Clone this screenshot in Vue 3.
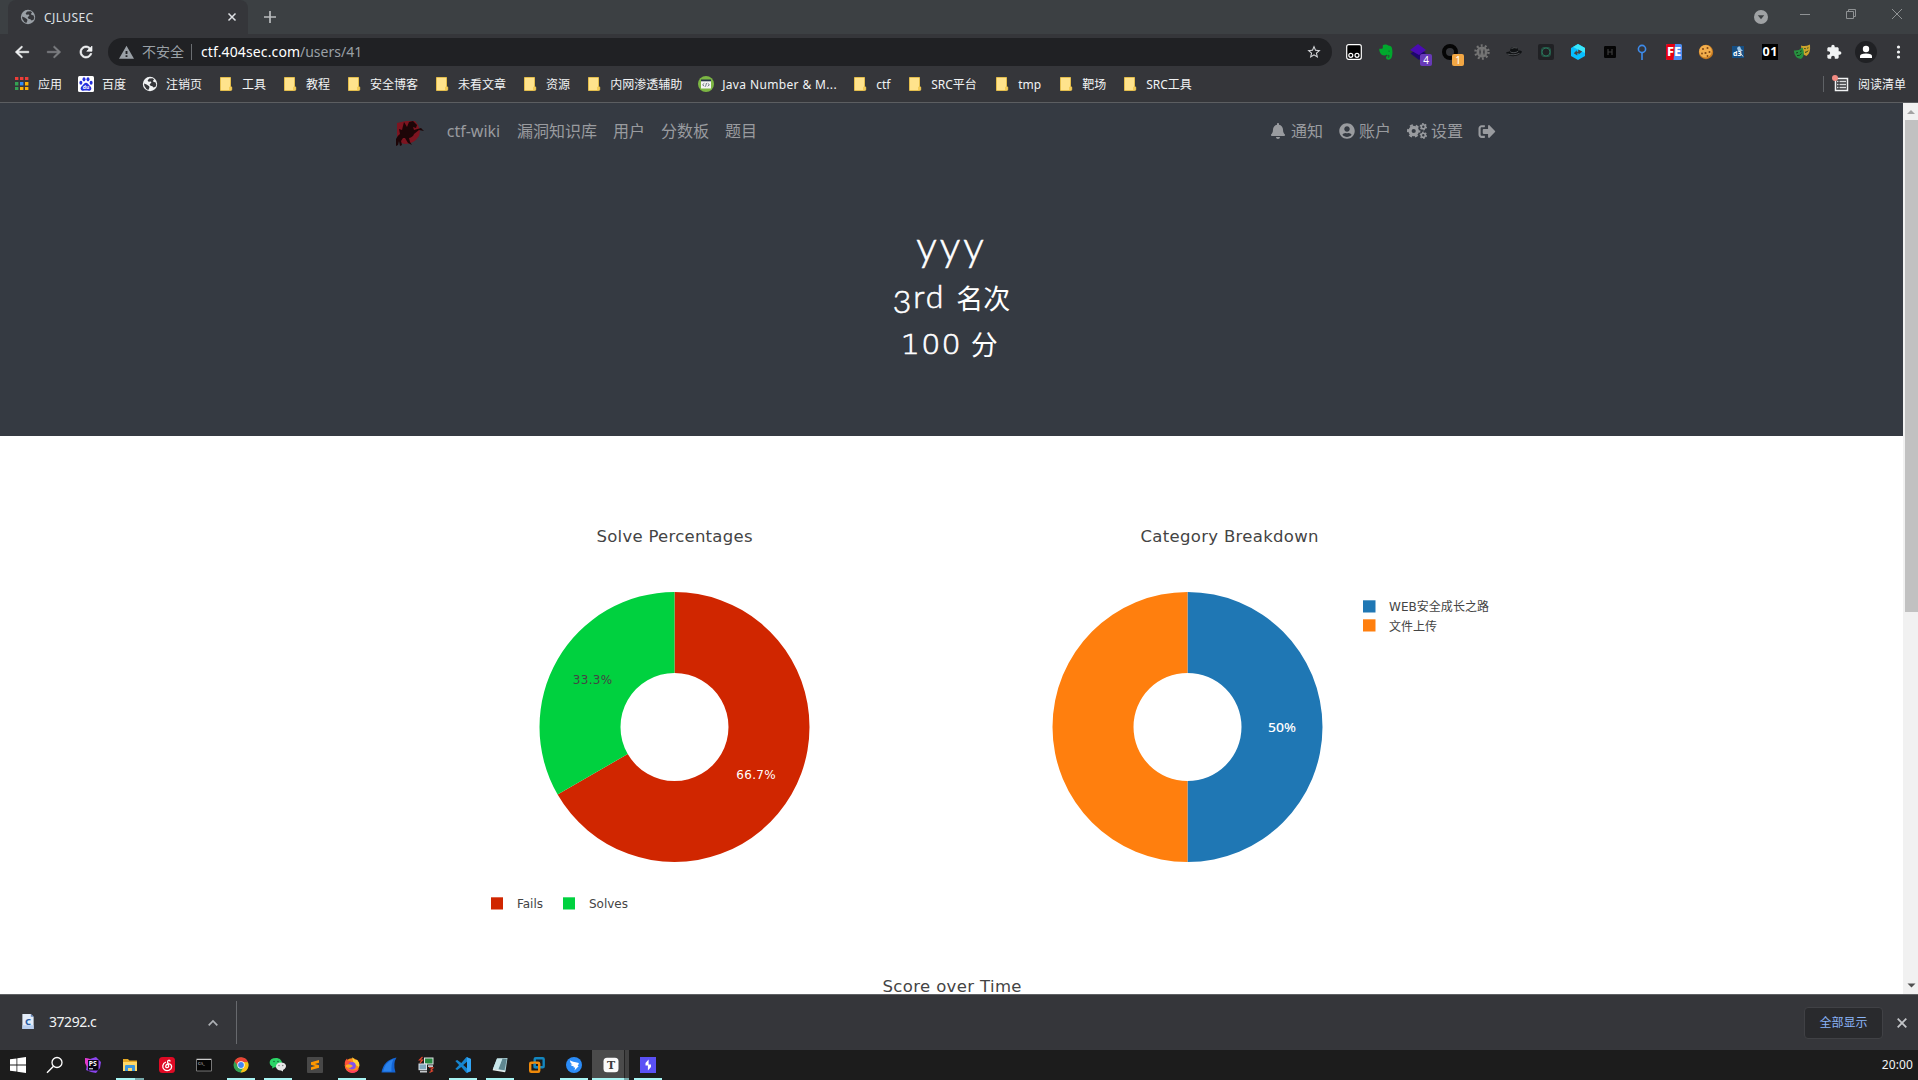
<script setup>
const globe = (land, sea) => `<circle cx="8" cy="8" r="7.2" fill="${land}"/><path d="M7.2 2.6 5.6 4.4l1 1.3 2.2-.3.6 1.4-1.8 1.4.9 1.5 1.9.5 1.2 1.4 2-.8.7-2.4-.9-2.1-1.9-.2-.4-1.6 1-1.2-1.6-1.1zM2 7.4l2.6 1 2.6 1.8.2 1.5-1.1 2.3-1.9-.9-2-3z" fill="${sea}"/>`

const folder = '<path d="M2.5 1.5h10v9.3l1.2.3v2.4q0 1-1 1H2.5z" fill="#ffe38c" stroke="#e3bd4c"/><path d="M11 14v-3.2h2.5V14z" fill="#f4cc57"/>'

const bookmarks = [
  { t: '应用', i: '<path d="M1 1h3.4v3H1zM6 1h3.4v3H6zM11 1h3.4v3H11z" fill="#ee3e38"/><path d="M1 6h3.4v3.4H1zM1 11h3.4v3H1z" fill="#34a353"/><path d="M6 6h3.4v3.4H6z" fill="#2f8df5"/><path d="M11 6h3.4v3.4H11zM6 11h3.4v3H6zM11 11h3.4v3H11z" fill="#fbb307"/>' },
  { t: '百度', i: '<rect width="16" height="16" rx="1.5" fill="#fff"/><g fill="#2630dc"><ellipse cx="2.9" cy="6.8" rx="1.5" ry="2"/><ellipse cx="6" cy="3.3" rx="1.5" ry="2.1"/><ellipse cx="10" cy="3.3" rx="1.5" ry="2.1"/><ellipse cx="13.1" cy="6.8" rx="1.5" ry="2"/><path d="M8 6.7c1.7 0 2.3 1.6 3.5 2.7 1.6 1.4 2.3 2.7 1.6 4.1-.8 1.9-3.2 1-5.1 1s-4.300.9-5.100-1c-.7-1.400 0-2.700 1.600-4.100C5.700 8.300 6.300 6.700 8 6.700z"/></g><text x="8" y="13.300" font-size="5" font-weight="700" text-anchor="middle" fill="#fff">du</text>' },
  { t: '注销页', i: globe('#f1f3f4', '#35363a') },
  { t: '工具', i: folder },
  { t: '教程', i: folder },
  { t: '安全博客', i: folder },
  { t: '未看文章', i: folder },
  { t: '资源', i: folder },
  { t: '内网渗透辅助', i: folder },
  { t: 'Java Number & M...', w: 114, i: '<circle cx="8" cy="8" r="8" fill="#7cb643"/><rect x="3" y="4" width="10" height="8.500" fill="#f4f4f4"/><path d="M3 3.500h10v1.800H3z" fill="#263648"/><path d="m6.300 7.300-1.700 1.500 1.700 1.500m3.400-3 1.700 1.500-1.700 1.500M8.500 7l-1 3.700" stroke="#4a5866" fill="none" stroke-width=".8"/>' },
  { t: 'ctf', w: 15, i: folder },
  { t: 'SRC平台', w: 47, i: folder },
  { t: 'tmp', w: 24, i: folder },
  { t: '靶场', i: folder },
  { t: 'SRC工具', w: 47, i: folder },
]

const extensions = [
  '<rect x=".7" y=".7" width="14.600" height="14.600" rx="2" fill="#000" stroke="#fff" stroke-width="1.200"/><g fill="none" stroke="#fff" stroke-width="1.200"><circle cx="4.800" cy="11.300" r="2"/><circle cx="11" cy="11.300" r="2"/></g>',
  '<path d="M4.800 1.200C6 .2 9 .2 10.200 1.600c2.300.2 3.300.8 3.800 2.700.7 3.200.6 6.500-.3 9-.6 1.900-2.300 2.500-4 2.300-1.700-.3-2.300-2.700-.9-3.700.8-.6 2.100-.5 2.500.4l-1.400.3c-.5 1 .9 1.500 1.400.5.300-.8.100-1.900-.4-2.300-.8.500-1.700.5-2.200-.3-.5 1.300-3.700 1.100-5 .2C2.100 9.700 1 6.700 1.300 4.800h2.500c.9 0 1-.4 1-1.200z" fill="#00a82d"/><path d="M10.200 7.300c.6-.7 1.600-.6 2 .2-.7-.2-1.300-.3-2-.2" fill="#23262a"/>',
  '<path d="m8 4 8 5-7 7L.5 9.500z" fill="#1e086b"/><path d="m8 0 8 6-7 5L0 6z" fill="#4a0bb3"/>',
  '<circle cx="8" cy="8" r="6" fill="none" stroke="#050505" stroke-width="4"/>',
  '<circle cx="8" cy="8" r="6.500" fill="none" stroke="#747474" stroke-width="2.500" stroke-dasharray="1.900 2.180"/><circle cx="8" cy="8" r="5.500" fill="#747474"/><path d="M6 5.500v5M10 5.500v5M5.500 8H7m2 0h1.500" stroke="#35363a" fill="none"/>',
  '<path d="M0 8.500c2-.9 3.300-.6 4-1.500.7-3.800 1.600-3.600 4.300-4 2.500-.3 3.600.9 4 3.600 2 .1 3.400.4 3.700 1.200-2.100 5-13.500 6.400-16 .7z" fill="#101214"/><path d="M4.200 7.700c1.500 1.500 5.800 1.400 8-.5M1.500 10c4 1.300 8.800.9 12-.7M5.500 4.500q2.500-1.500 5.500-.5" fill="none" stroke="#6a6d70" stroke-width=".7"/>',
  '<rect width="16" height="16" rx="2" fill="#202124"/><rect x="3.500" y="3.500" width="9" height="9" rx="2.500" fill="none" stroke="#245847"/><circle cx="8" cy="8" r="4" fill="none" stroke="#2a7259"/>',
  '<path d="m8 0 7 4v8l-7 4-7-4V4z" fill="#08bfff"/><path d="m8 0 7 4v5L3 3z" fill="#3be7fa"/><path d="m3.800 9.300 3-3v1.400h1.400V5.500L12.200 7.500l-3.600 3V9.200H7.300v2.200z" fill="#4a4240"/>',
  '<rect x="2" y="2" width="12" height="12" rx="1.200" fill="#050505"/><path d="M6 5v6M10 5v6M6 8h4" stroke="#3c3c3c" stroke-width="1.200"/>',
  '<circle cx="8" cy="5" r="3.600" fill="none" stroke="#3d8bea" stroke-width="1.600"/><path d="M8 8v8" stroke="#3d8bea" stroke-width="1.600"/>',
  '<rect width="16" height="16" rx="1.500" fill="#4b8df0"/><path d="M1.500 0H9L7.500 16h-6Q0 16 0 14.500v-13Q0 0 1.500 0" fill="#e60012"/><text x="8" y="12" font-size="11.500" font-weight="800" text-anchor="middle" fill="#fff" textLength="14" lengthAdjust="spacingAndGlyphs">FE</text>',
  '<circle cx="8" cy="8" r="7.200" fill="#c77a20"/><circle cx="7.500" cy="7.300" r="6.300" fill="#f1ad4c"/><g fill="#7e4513"><circle cx="5" cy="5" r="1"/><circle cx="9.500" cy="4" r="1"/><circle cx="11.500" cy="8" r="1"/><circle cx="7.500" cy="9" r="1.100"/><circle cx="4" cy="9.500" r=".9"/><circle cx="9.500" cy="12" r=".9"/></g>',
  '<rect x="2" y="2" width="12" height="12" fill="#164f83"/><path d="M7 4q3-4 4 1l2 2-5 0z" fill="#9fc4e3"/><text x="3" y="12" font-size="7" font-weight="700" fill="#fff">d3</text><path d="m10.500 9 2.500 3.500" stroke="#d8e6f0"/>',
  '<path d="M0 0h16v16H0z" fill="#000"/><text x="8" y="12" font-size="12.500" font-weight="700" text-anchor="middle" fill="#fff" textLength="15">01</text>',
  '<path d="M7 1.500q4 1.500 9-1 .8 9-3.500 11.500Q7.500 11 7 1.500" fill="#cfa42b"/><path d="M-.2 6.500Q5 7 8.600 3.500 12 11.500 7 15 .5 14.500-.2 6.500" fill="#27913f"/><path d="m2 9 2-.5m2-1 1.700-.7M3 11.500q2.500.7 4.500-2M10.300 4.500l1.400.2m1.500-.5 1.200-.4M11 8.300q2 .2 3-1.700" stroke="#173d20" fill="none"/>',
  '<path transform="scale(.667)" d="M20.500 11H19V7c0-1.100-.9-2-2-2h-4V3.500C13 2.120 11.880 1 10.500 1S8 2.120 8 3.500V5H4c-1.100 0-1.990.9-1.990 2v3.800H3.500c1.490 0 2.700 1.210 2.700 2.700s-1.210 2.700-2.700 2.700H2V20c0 1.100.9 2 2 2h3.800v-1.500c0-1.490 1.210-2.700 2.700-2.700 1.490 0 2.700 1.210 2.700 2.700V22H17c1.100 0 2-.9 2-2v-4h1.500c1.380 0 2.500-1.120 2.500-2.500S21.880 11 20.500 11z" fill="#f1f3f4"/>',
  '<circle cx="8" cy="8" r="11" fill="#202124"/><circle cx="8" cy="5" r="3.200" fill="#fff"/><path d="M2 14v-1.800Q2 9.500 8 9.500t6 2.700V14z" fill="#fff"/>',
  '<g fill="#f1f3f4"><circle cx="8.500" cy="3" r="1.600"/><circle cx="8.500" cy="8" r="1.600"/><circle cx="8.500" cy="13" r="1.600"/></g>',
]
const badges = { 2: ['4', 'violet'], 3: ['1', 'amber'] }

const tasks = [
  { i: '<path d="M0 2.300 6.500 1.400v6.200H0zM7.300 1.300 16 0v7.600H7.300zM0 8.400h6.500v6.200L0 13.700zM7.300 8.400H16V16l-8.700-1.300z" fill="#fff"/>' },
  { i: '<circle cx="10" cy="5.500" r="5" fill="none" stroke="#fff" stroke-width="1.300"/><path d="M6.500 9.200 0 15.700" stroke="#fff" stroke-width="1.500"/>' },
  { i: '<path d="M0 1 5 2l6-2 5 5-1 6-4 5-5-1-5-2 1-5z" fill="#8b45ed"/><path d="m0 1 5 1 2 4-5 4-2-4z" fill="#e33acb"/><rect x="3" y="3" width="10.500" height="10.500" fill="#080412"/><text x="3.700" y="9.300" font-size="6.800" font-weight="700" fill="#fff">PS</text><path d="M4 11.800h4" stroke="#fff"/>' },
  { i: '<path d="M1 2h5l1.300 1.500H15V14H1z" fill="#e7a924"/><path d="M1 5h14v9H1z" fill="#ffd968"/><path d="M3 14V9q0-1 1-1h8q1 0 1 1v5h-3v-3H6v3z" fill="#3c96dc"/>', run: 'split' },
  { i: '<rect width="16" height="16" rx="3.500" fill="#df0a24"/><path d="M11.300 4.500C10.700 2.600 8.300 3 8.600 5l1 4c.3 2-2.800 2.400-2.900.4 0-1.600 1.600-3 3.600-2.500 3 .8 3.200 5-.1 6.300-3.600 1.300-7-1.200-6.400-4.500C4.100 7 5.200 5.600 7 5" fill="none" stroke="#fff" stroke-width="1.300"/>' },
  { i: '<path d="M.5 2h15v12H.5z" fill="#050505" stroke="#777"/><path d="M1 2.500h14" stroke="#ccc"/><text x="2" y="7.500" font-size="4" fill="#eee">C:\\_</text>' },
  { i: '<circle cx="8" cy="8" r="7.500" fill="#34a353"/><path d="M1.500 4.200A7.500 7.500 0 0 1 15 5H8L5 9z" fill="#e94335"/><path d="M15 5.200A7.500 7.500 0 0 1 7.500 15.500L11.200 9 10.500 5z" fill="#fbc116"/><circle cx="8" cy="8" r="3.700" fill="#fff"/><circle cx="8" cy="8" r="2.900" fill="#4285f4"/>', run: 'on' },
  { i: '<path d="M6 1c-8 0-7.500 7-3.500 8.500L2 11.500l2.500-1.200C15 11 13.500 1 6 1" fill="#2bd567"/><path d="M11 5.500c-7 0-6.500 8 0 8l2 1v-1.500c5-2.500 3.500-7.500-2-7.500" fill="#e7e7e7"/><g fill="#17663b"><circle cx="4" cy="4.500" r=".8"/><circle cx="8" cy="4.500" r=".8"/></g><g fill="#777"><circle cx="9" cy="8.500" r=".7"/><circle cx="12.800" cy="8.500" r=".7"/></g>', run: 'on' },
  { i: '<rect width="16" height="16" rx="1" fill="#484848"/><path d="m4 5.300 8-2.300v2.800L7.800 7 12 8.300v2.500L4 13v-2.700L8.400 9 4 7.700z" fill="#ff9800"/>' },
  { i: '<circle cx="8" cy="8.500" r="7.300" fill="#ff8b19"/><path d="M8 .2q2 1 3 3 2-1 2.700.5Q16 6 15 10l-5-3z" fill="#ffd438"/><path d="M.7 6Q1 3 3 1.500L4 4l3 0-1 3-4 4z" fill="#ff513b"/><circle cx="8" cy="8.700" r="3.800" fill="#8051ed"/><path d="M2 8q4-2 7 1l-3 2-4-1z" fill="#ffaf25"/><path d="M1 10q2 5 7 5.900 5 0 7-4-8 4-14-1.900" fill="#ff405e"/>', run: 'on' },
  { i: '<path d="M.5 15.500Q2.500 3 15.500.5q-3.800 6-1 15z" fill="#1363d2"/><path d="M2 14.500Q4 5 12.500 2q-2.500 5-2 12.500z" fill="#2a82ec"/>' },
  { i: '<path d="M6 .5h9.500v7H6z" fill="#e0e5e8"/><path d="M7 1.500h7.500v5H7z" fill="#298a41"/><path d="M.5 6.500H9v6.700H.5z" fill="#dce1e8"/><path d="M1.500 7.500H8v4.700H1.500z" fill="#7fa8bf"/><path d="M2 14.700h7m1-5.500h5" stroke="#c5c8ca" stroke-width="1.800"/><path d="M4.500 0 1.500 3h3L2 6M11 10.500l4 .5-2 2 1.500 1-3 1.500" fill="none" stroke="#e0452f" stroke-width="1.200"/>' },
  { i: '<path d="m11.500 0 4.500 2v12l-4.500 2L6.300 10 2.200 13 .3 12l3.800-4L.3 4l1.900-1 4.100 3zM12 4.800 8.200 8l3.800 3.200z" fill="#1686d0" fill-rule="evenodd"/><path d="M12 .2 16 2v12l-4 1.800z" fill="#32a5f5"/>', run: 'on' },
  { i: '<path d="M5 1.500 15.500 1 13.500 14.500 1 12z" fill="#a9cfd6"/><path d="M10 2h4.800L12.500 13.300l-6-1z" fill="#5f8790"/><path d="M5 1.500h5.500L6 12.800l-5-1z" fill="#c8e6ea"/><path d="m1 11.800 12.300 2-.3 1.500-12.300-2z" fill="#e4eeee"/>', run: 'on' },
  { i: '<rect x="5.700" y="1.200" width="9" height="9" rx="1" fill="none" stroke="#1387c0" stroke-width="2.400"/><rect x="1.200" y="5.700" width="9" height="9" rx="1" fill="none" stroke="#f08a0a" stroke-width="2.400"/><path d="M5.700 6.500v3.700H9" fill="none" stroke="#1387c0" stroke-width="2.200"/>' },
  { i: '<circle cx="8" cy="8" r="8" fill="#2b8cf7"/><path d="M3.800 3.200q2.300 1.600 9 2.700.2 1-1.200 3.100h1.200L8.500 13.500l.7-3H7.500l.4-1.100Q5 9 4.500 7.500l2 .1Q4.200 6.500 3.800 3.200" fill="#fff"/>', run: 'on' },
  { i: '<rect x=".5" y=".8" width="15" height="14.400" rx="3.500" fill="#fafafa"/><text x="8" y="12" font-size="11" font-weight="700" text-anchor="middle" fill="#3b3b3b" font-family="DejaVu Serif, serif">T</text>', run: 'active' },
  { i: '<path d="M0 0h16v16H0z" fill="#5a50f5"/><path d="M8.600 2.500 5.500 6v2.600h2.400v4.900l3.100-3.500V7.400H8.600z" fill="#fff"/>', run: 'on' },
]

const menu = ['ctf-wiki', '漏洞知识库', '用户', '分数板', '题目']
const account = [
  { t: '通知', w: 16, vb: '32 0 448 512', i: '<path d="M224 512c35.320 0 63.970-28.650 63.970-64H160.030c0 35.350 28.650 64 63.970 64zm215.390-149.710c-19.320-20.760-55.470-51.990-55.470-154.290 0-77.700-54.480-139.900-127.940-155.160V32c0-17.670-14.320-32-31.980-32s-31.980 14.330-31.980 32v20.840C118.560 68.100 64.080 130.300 64.080 208c0 102.300-36.150 133.530-55.470 154.290-6 6.450-8.660 14.160-8.610 21.710.11 16.400 12.980 32 32.100 32h383.800c19.120 0 32-15.600 32.100-32 .05-7.550-2.610-15.270-8.610-21.710z"/>' },
  { t: '账户', w: 16, vb: '0 0 496 512', i: '<path d="M248 8C111 8 0 119 0 256s111 248 248 248 248-111 248-248S385 8 248 8zm0 96c48.600 0 88 39.400 88 88s-39.400 88-88 88-88-39.400-88-88 39.400-88 88-88zm0 344c-58.700 0-111.300-26.600-146.500-68.200 18.800-35.400 55.600-59.800 98.500-59.800 2.400 0 4.800.4 7.100 1.100 13 4.200 26.600 6.900 40.900 6.900 14.300 0 28-2.700 40.900-6.900 2.300-.7 4.700-1.100 7.100-1.100 42.900 0 79.700 24.400 98.500 59.800C359.300 421.400 306.700 448 248 448z"/>' },
  { t: '设置', w: 20, vb: '0 0 20 16', i: '<g fill="none" stroke="currentColor"><circle cx="6.700" cy="8" r="3.700" stroke-width="3.200"/><circle cx="6.700" cy="8" r="5.700" stroke-width="2" stroke-dasharray="2.980 2.980" stroke-dashoffset="1.500"/><circle cx="16.300" cy="3.700" r="2" stroke-width="1.600"/><circle cx="16.300" cy="3.700" r="3.100" stroke-width="1.200" stroke-dasharray="1.620 1.620"/><circle cx="16.300" cy="12.300" r="2" stroke-width="1.600"/><circle cx="16.300" cy="12.300" r="3.100" stroke-width="1.200" stroke-dasharray="1.620 1.620"/></g>' },
]
</script>

<template>
  <div class="desktop">
    <div class="tabstrip">
      <div class="tab">
        <svg class="s16" viewBox="0 0 16 16" v-html="globe('#9aa0a6', '#35363a')" />
        <span class="tab-title">CJLUSEC</span>
        <svg class="tab-close" viewBox="0 0 8 8"><path d="m.5.5 7 7m0-7-7 7" stroke="#dfe1e5" stroke-width="1.500" /></svg>
      </div>
      <svg class="plus" viewBox="0 0 12 12"><path d="M6 0v12M0 6h12" stroke="#b9bcbe" stroke-width="1.700" /></svg>
      <div class="window-controls">
        <svg class="s16" viewBox="0 0 16 16"><circle cx="8" cy="8" r="7" fill="#9fa2a4" /><path d="M4.800 6.300h6.400L8 10.300z" fill="#3c4043" /></svg>
        <svg class="win" viewBox="0 0 10 10"><path d="M0 5.500h10" stroke="#8f9294" /></svg>
        <svg class="win" viewBox="0 0 10 10"><path d="M.5 2.500h7v7h-7zM2.500 2V.5h7v7H8" fill="none" stroke="#8f9294" /></svg>
        <svg class="win" viewBox="0 0 10 10"><path d="m0 0 10 10M10 0 0 10" stroke="#8f9294" /></svg>
      </div>
    </div>

    <div class="toolbar">
      <svg class="nav-icon" viewBox="0 0 24 24"><path d="M21 11H7.200l5.700-5.600L11.500 4 3 12l8.500 8 1.400-1.400L7.200 13H21z" fill="#f1f3f4" stroke="#f1f3f4" stroke-width=".7" /></svg>
      <svg class="nav-icon" viewBox="0 0 24 24"><path d="M3 11h13.800l-5.700-5.600L12.500 4l8.500 8-8.500 8-1.400-1.400 5.700-5.600H3z" fill="#7d7f82" stroke="#7d7f82" stroke-width=".7" /></svg>
      <svg class="nav-icon" viewBox="0 0 24 24"><path d="M17.650 6.350C16.200 4.900 14.210 4 12 4c-4.420 0-7.990 3.580-7.990 8s3.570 8 7.990 8c3.730 0 6.840-2.550 7.730-6h-2.080c-.82 2.330-3.040 4-5.650 4-3.310 0-6-2.690-6-6s2.690-6 6-6c1.660 0 3.140.69 4.220 1.780L13 11h7V4z" fill="#f1f3f4" stroke="#f1f3f4" stroke-width=".9" /></svg>
      <div class="omnibox">
        <svg class="warn" viewBox="0 0 24 24"><path d="M0 22h24L12 1zm13.500-3h-3v-2.500h3zm0-4.500h-3v-5h3z" fill="#9aa0a6" /></svg>
        <span class="insecure">不安全</span>
        <i class="bar" />
        <span class="host">ctf.404sec.com</span><span class="path">/users/41</span>
        <svg class="star" viewBox="0 0 24 24"><path d="M22 9.240l-7.190-.62L12 2 9.190 8.630 2 9.240l5.460 4.730L5.820 21 12 17.270 18.180 21l-1.630-7.030zM12 15.400l-3.760 2.270 1-4.280-3.320-2.880 4.380-.38L12 6.100l1.710 4.040 4.380.38-3.320 2.880 1 4.280z" fill="#d5d7da" /></svg>
      </div>
      <div class="extensions">
        <div v-for="(e, n) in extensions" :key="n" class="ext">
          <svg class="s16" viewBox="0 0 16 16" v-html="e" />
          <span v-if="badges[n]" class="badge" :class="badges[n][1]">{{ badges[n][0] }}</span>
        </div>
      </div>
    </div>

    <div class="bookmarks">
      <div v-for="b in bookmarks" :key="b.t" class="bookmark">
        <svg class="s16" viewBox="0 0 16 16" v-html="b.i" />
        <span :style="b.w ? { width: b.w + 'px' } : null" :class="{ latin: b.w > 100 }">{{ b.t }}</span>
      </div>
      <div class="reading">
        <svg class="s20" viewBox="0 0 20 20"><path d="M5.500 4.500h12v12h-12z" fill="none" stroke="#f1f3f4" stroke-width="1.500" /><path d="M7 7.500h1.500m1 0H16m-9 3h1.500m1 0H16m-9 3h1.500m1 0H16" stroke="#d8dadc" stroke-width="1.300" /><circle cx="5" cy="4" r="3" fill="#f28b82" /></svg>
        <span>阅读清单</span>
      </div>
    </div>

    <div class="viewport">
      <div class="page">
        <header class="hero">
          <nav class="site-nav">
            <svg class="logo" viewBox="0 0 28 26"><path d="M1 3 10 1h9q7 8 4 15-5 8-14 8-7-1-8-8z" fill="#7d1420" /><path d="M8 2l3 5 2-5 4-1 4 4-1 3-3-1 1 3 7-2 3 3-5-1-5 4q-1 3-5 4l1 4 2 3-4-2-3-5-2 0-2 3 1 4-2 1-1-5-1 4-2 1V19q2-4 4-5L3 9l3 1z" fill="#1d0507" /></svg>
            <a v-for="m in menu" :key="m">{{ m }}</a>
            <div class="account">
              <a v-for="a in account" :key="a.t"><svg :viewBox="a.vb" :width="a.w" height="16" fill="currentColor" v-html="a.i" />{{ a.t }}</a>
              <a><svg viewBox="0 0 512 512" width="18" height="17" fill="currentColor"><path d="M497 273L329 441c-15 15-41 4.500-41-17v-96H152c-13.300 0-24-10.700-24-24v-96c0-13.300 10.700-24 24-24h136V88c0-21.400 25.900-32 41-17l168 168c9.300 9.400 9.300 24.600 0 34zM192 436v-40c0-6.600-5.400-12-12-12H96c-17.700 0-32-14.300-32-32V160c0-17.700 14.300-32 32-32h84c6.600 0 12-5.400 12-12V76c0-6.600-5.400-12-12-12H96c-53 0-96 43-96 96v192c0 53 43 96 96 96h84c6.600 0 12-5.400 12-12z" /></svg></a>
            </div>
          </nav>
          <h1>yyy</h1>
          <h2><span class="low">3</span>rd <span class="cjk">名次</span></h2>
          <h2 class="points"><span class="oldstyle">100</span><span class="cjk">分</span></h2>
        </header>

        <div class="charts">
          <svg width="560" height="500" viewBox="0 0 560 500">
            <text x="282.500" y="106" class="title" textLength="156">Solve Percentages</text>
            <path d="M282.500 156a135 135 0 1 1-116.910 202.500l70.140-40.500A54 54 0 1 0 282.500 237z" fill="#d02600" />
            <path d="M282.500 156a135 135 0 0 0-116.910 202.500l70.140-40.500A54 54 0 0 1 282.500 237z" fill="#00d13f" />
            <text x="200.500" y="248" class="label" textLength="39.500">33.3%</text>
            <text x="364" y="343" class="label light" textLength="39.500">66.7%</text>
            <path d="M99 461.300h12v12.200H99z" fill="#d02600" /><text x="125" y="472" class="key" textLength="26">Fails</text>
            <path d="M171 461.300h12v12.200h-12z" fill="#00d13f" /><text x="197" y="472" class="key" textLength="39">Solves</text>
          </svg>
          <svg width="560" height="500" viewBox="0 0 560 500">
            <text x="277.500" y="106" class="title" textLength="178">Category Breakdown</text>
            <path d="M235.500 156a135 135 0 0 1 0 270v-81a54 54 0 0 0 0-108z" fill="#1f77b4" />
            <path d="M235.500 156a135 135 0 0 0 0 270v-81a54 54 0 0 1 0-108z" fill="#ff7f0e" />
            <text x="330" y="296" class="label light half" textLength="28" lengthAdjust="spacingAndGlyphs">50%</text>
            <path d="M411 164.300h12.500v12.200H411z" fill="#1f77b4" /><text x="437" y="175" class="key" textLength="100">WEB安全成长之路</text>
            <path d="M411 183.300h12.500v12.200H411z" fill="#ff7f0e" /><text x="437" y="194.500" class="key">文件上传</text>
          </svg>
        </div>
        <svg class="score" width="1120" height="100" viewBox="0 0 1120 100"><text x="560" y="56" class="title" textLength="139">Score over Time</text></svg>
      </div>
      <div class="scrollbar">
        <svg viewBox="0 0 15 17"><path d="m4 11 4-4 4 4z" fill="#a3a3a3" /></svg>
        <div class="thumb" />
        <svg viewBox="0 0 15 17"><path d="m4.500 6.500 4 4 4-4z" fill="#505050" /></svg>
      </div>
    </div>

    <div class="downloads">
      <div class="file">
        <svg viewBox="0 0 12 16"><path d="M0 0h9l3 3v13H0z" fill="#e4edf9" /><path d="M9 0v3h3z" fill="#6387bd" /><path d="M0 12h12v4H0z" fill="#b9cff0" /><text x="6" y="12" font-size="10" font-weight="800" text-anchor="middle" fill="#2c5fa6">C</text></svg>
        <span>37292.c</span>
        <svg class="caret" viewBox="0 0 10 6"><path d="m.7 5.300 4.300-4.300 4.300 4.300" fill="none" stroke="#aeb1b5" stroke-width="1.700" /></svg>
      </div>
      <div class="show-all">全部显示</div>
      <svg class="dismiss" viewBox="0 0 10 10"><path d="m.7.7 8.600 8.600m0-8.600L.7 9.300" stroke="#c3c5c8" stroke-width="1.800" /></svg>
    </div>

    <div class="taskbar">
      <div v-for="(t, n) in tasks" :key="n" class="task" :class="t.run">
        <svg class="s16" viewBox="0 0 16 16" v-html="t.i" />
      </div>
      <time>20:00</time>
    </div>
  </div>
</template>

<style>
body { margin: 0; overflow: hidden; }
</style>

<style scoped>
.desktop { width: 1918px; height: 1080px; display: flex; flex-direction: column; overflow: hidden; background: #35363a; font-family: "Noto Sans", "Noto Sans CJK SC", sans-serif; font-size: 12px; color: #f1f3f4; }
.desktop svg { display: block; flex: none; overflow: visible; }
.s16 { width: 16px; height: 16px; }
.s20 { width: 20px; height: 20px; }
.tabstrip { height: 34px; flex: none; display: flex; align-items: center; background: #3c4043; }
.tab { box-sizing: border-box; width: 240px; height: 34px; margin-left: 8px; padding: 0 12px; display: flex; align-items: center; background: #35363a; border-radius: 8px 8px 0 0; }
.tab-title { margin-left: 8px; flex: 1; color: #dfe1e5; letter-spacing: .4px; }
.tab-close { width: 8px; height: 8px; }
.plus { width: 12px; height: 12px; margin-left: 16px; }
.window-controls { margin-left: auto; display: flex; padding-right: 16px; align-items: center; }
.win { width: 10px; height: 10px; margin: -6px 0 0 36px; }
.win:nth-child(2) { margin-left: 31px; }
.toolbar { height: 36px; flex: none; display: flex; align-items: center; padding-left: 13px; }
.nav-icon { width: 18px; height: 18px; margin-right: 14px; }
.omnibox { box-sizing: border-box; width: 1224px; height: 28px; margin-left: -1px; padding: 0 10px 0 11px; border-radius: 14px; background: #202124; display: flex; align-items: center; font-size: 14px; line-height: 18px; }
.omnibox span { margin-top: -1px; }
.warn { width: 15px; height: 15px; margin-right: 8px; }
.insecure { width: 42px; color: #9aa0a6; }
.bar { width: 1px; height: 16px; margin: 0 9px 0 7px; background: #6a6d71; }
.host { width: 99px; letter-spacing: .13px; white-space: nowrap; color: #fff; }
.path { color: #9aa0a6; letter-spacing: 0; }
.star { width: 16px; height: 16px; margin-left: auto; }
.extensions { display: flex; margin-left: 6px; }
.ext { position: relative; width: 32px; height: 32px; display: flex; align-items: center; justify-content: center; }
.badge { position: absolute; left: 18px; top: 18px; width: 12px; height: 12px; border-radius: 2px; font-size: 10px; line-height: 12px; text-align: center; color: #fff; }
.violet { background: #673ab7; }
.amber { background: #f2a744; }
.bookmarks { box-sizing: border-box; height: 33px; flex: none; display: flex; gap: 16px; padding: 0 12px 4px 14px; align-items: center; border-bottom: 1px solid #5c5e61; }
.bookmark { display: flex; align-items: center; gap: 8px; white-space: nowrap; line-height: 16px; height: 16px; }
.bookmark span { margin-top: 1px; }
.bookmark .latin { letter-spacing: .36px; }
.reading { margin-left: auto; display: flex; align-items: center; gap: 8px; height: 16px; padding-left: 6px; border-left: 1px solid #5f6266; line-height: 16px; }
.reading span { margin-top: 1px; }
.viewport { height: 891px; flex: none; display: flex; overflow: hidden; background: #fff; }
.page { width: 1903px; height: 891px; overflow: hidden; }
.hero { height: 333px; background: #353a42; text-align: center; color: #fff; }
.site-nav { height: 56px; width: 1098px; margin: 0 0 0 396px; display: flex; align-items: center; gap: 16px; font-size: 16px; color: #999b9f; line-height: 24px; white-space: nowrap; }
.logo { width: 28px; height: 26px; margin-right: 6px; margin-top: 4px; }
.site-nav > a:nth-of-type(1) { width: 55px; letter-spacing: 0; }
.account { display: flex; gap: 16px; margin-left: auto; margin-right: -2px; }
.account a { display: flex; align-items: center; gap: 4px; }
.account a:last-child { margin-left: -1px; }
h1, h2 { margin: 0; font-family: Lato, "Noto Sans CJK SC", sans-serif; font-weight: 300; letter-spacing: 2px; white-space: nowrap; -webkit-text-stroke: .6px #fff; }
h1 { margin-top: 63px; margin-bottom: 3px; font-size: 41px; line-height: 48px; letter-spacing: 3px; }
h2 { display: flex; align-items: center; justify-content: center; font-size: 32px; line-height: 46px; height: 46px; }
.low { position: relative; top: 5px; }
h2 .cjk { margin: 5px 0 0 11px; font-size: 27px; font-weight: 400; letter-spacing: 0; -webkit-text-stroke: 0; }
.points .cjk { margin-left: 13px; }
.oldstyle { font-family: "DejaVu Sans", sans-serif; font-weight: 200; font-size: 26px; letter-spacing: 1px; transform: scaleX(1.16); margin-top: 5px; }
.charts { display: flex; margin-left: 392px; }
.score { margin-left: 392px; }
.title { font: 16.500px "DejaVu Sans", sans-serif; fill: #444; text-anchor: middle; }
.label, .key { font: 12px "DejaVu Sans", "Noto Sans CJK SC", sans-serif; fill: #444; }
.label { text-anchor: middle; }
.light { fill: #fff; }
.half { font-family: "Noto Sans", sans-serif; font-weight: 500; font-size: 13px; }
.scrollbar { width: 15px; background: #f1f1f1; display: flex; flex-direction: column; justify-content: space-between; }
.scrollbar svg { width: 15px; height: 17px; }
.thumb { width: 13px; height: 492px; margin: 0 0 auto 2px; background: #c1c1c1; }
.downloads { box-sizing: border-box; height: 56px; flex: none; border-top: 1px solid #5f6164; display: flex; align-items: center; }
.file { box-sizing: border-box; width: 237px; height: 43px; display: flex; align-items: center; padding: 0 18px 0 22px; border-right: 1px solid #67696d; font-size: 14px; }
.file svg { width: 12px; height: 15px; margin: -2px 15px 0 0; }
.file span { letter-spacing: -.45px; margin-top: -2px; }
.file .caret { width: 10px; height: 6px; margin: 0 0 0 auto; }
.show-all { box-sizing: border-box; width: 79px; height: 32px; margin-left: auto; border: 1px solid #404145; border-radius: 4px; background: #292a2d; color: #8ab4f8; line-height: 29px; text-align: center; }
.dismiss { width: 10px; height: 10px; margin: 0 11px 0 14px; }
.taskbar { height: 30px; flex: none; background: #1c1c1c; display: flex; align-items: center; padding-right: 5px; }
.task { box-sizing: border-box; width: 37px; height: 30px; flex: none; display: flex; align-items: center; justify-content: center; background: linear-gradient(#a8f5f4, #a8f5f4) center bottom / 0 2px no-repeat; }
.task:nth-child(1) { width: 36px; }
.task:nth-child(2) { width: 38px; }
.task.on { background-size: 28px 2px; }
.task.split { background: linear-gradient(90deg, #a8f5f4 19px, #77aaab 19px) center bottom / 28px 2px no-repeat; }
.task.active { background: linear-gradient(90deg, #a8f5f4 32px, #77aaab 32px) 0 100% / 37px 2px no-repeat, linear-gradient(90deg, #4b4b4b 32px, #242424 32px, #242424 33px, #424242 33px); }
time { margin: -2px 0 0 auto; letter-spacing: .1px; }
</style>
